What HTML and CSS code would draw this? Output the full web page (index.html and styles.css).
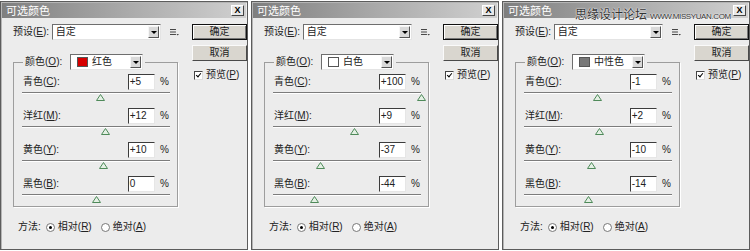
FILE: index.html
```html
<!DOCTYPE html>
<html lang="zh-CN">
<head>
  <meta charset="UTF-8">
  <title>可选颜色</title>
  <link rel="stylesheet" href="styles.css">
</head>
<body>
  <div class="dialogs">

    <!-- 红色 -->
    <div class="dialog">
      <div class="titlebar"><span>可选颜色</span><span class="close">X</span></div>
      <div class="content">
        <div class="left">
          <div class="preset">
            <label>预设(<u>E</u>):</label>
            <div class="select wide"><span>自定</span><i class="arrow"></i></div>
            <svg class="menu-icon" width="9" height="8" viewBox="0 0 9 8"><path d="M0 1.5h6M0 4h6M0 6.5h6" stroke="#444" stroke-width="1"/><path d="M6.5 6h2.5l-1.25 1.5z" fill="#444"/></svg>
          </div>
          <fieldset class="group">
            <legend>
              <label>颜色(<u>O</u>):</label>
              <div class="select color"><b class="swatch red"></b><span>红色</span><i class="arrow"></i></div>
            </legend>
            <div class="row">
              <div class="field"><label>青色(<u>C</u>):</label><span class="input">+5</span><span class="pct">%</span></div>
              <div class="slider"><svg class="thumb" style="left: 52.5%" width="9" height="7" viewBox="0 0 9 7"><path d="M4.5 0.5L8.5 6.5H0.5Z" fill="#e4f0e4" stroke="#4f8a5a"/></svg></div>
            </div>
            <div class="row">
              <div class="field"><label>洋红(<u>M</u>):</label><span class="input">+12</span><span class="pct">%</span></div>
              <div class="slider"><svg class="thumb" style="left: 56%" width="9" height="7" viewBox="0 0 9 7"><path d="M4.5 0.5L8.5 6.5H0.5Z" fill="#e4f0e4" stroke="#4f8a5a"/></svg></div>
            </div>
            <div class="row">
              <div class="field"><label>黄色(<u>Y</u>):</label><span class="input">+10</span><span class="pct">%</span></div>
              <div class="slider"><svg class="thumb" style="left: 55%" width="9" height="7" viewBox="0 0 9 7"><path d="M4.5 0.5L8.5 6.5H0.5Z" fill="#e4f0e4" stroke="#4f8a5a"/></svg></div>
            </div>
            <div class="row">
              <div class="field"><label>黑色(<u>B</u>):</label><span class="input">0</span><span class="pct">%</span></div>
              <div class="slider"><svg class="thumb" style="left: 50%" width="9" height="7" viewBox="0 0 9 7"><path d="M4.5 0.5L8.5 6.5H0.5Z" fill="#e4f0e4" stroke="#4f8a5a"/></svg></div>
            </div>
          </fieldset>
          <div class="method">
            <span>方法:</span>
            <span class="radio on"></span><span>相对(<u>R</u>)</span>
            <span class="radio"></span><span>绝对(<u>A</u>)</span>
          </div>
        </div>
        <div class="right">
          <button class="btn default">确定</button>
          <button class="btn">取消</button>
          <div class="check"><span class="box"></span><span>预览(<u>P</u>)</span></div>
        </div>
      </div>
    </div>

    <!-- 白色 -->
    <div class="dialog">
      <div class="titlebar"><span>可选颜色</span><span class="close">X</span></div>
      <div class="content">
        <div class="left">
          <div class="preset">
            <label>预设(<u>E</u>):</label>
            <div class="select wide"><span>自定</span><i class="arrow"></i></div>
            <svg class="menu-icon" width="9" height="8" viewBox="0 0 9 8"><path d="M0 1.5h6M0 4h6M0 6.5h6" stroke="#444" stroke-width="1"/><path d="M6.5 6h2.5l-1.25 1.5z" fill="#444"/></svg>
          </div>
          <fieldset class="group">
            <legend>
              <label>颜色(<u>O</u>):</label>
              <div class="select color"><b class="swatch white"></b><span>白色</span><i class="arrow"></i></div>
            </legend>
            <div class="row">
              <div class="field"><label>青色(<u>C</u>):</label><span class="input">+100</span><span class="pct">%</span></div>
              <div class="slider"><svg class="thumb" style="left: 100%" width="9" height="7" viewBox="0 0 9 7"><path d="M4.5 0.5L8.5 6.5H0.5Z" fill="#e4f0e4" stroke="#4f8a5a"/></svg></div>
            </div>
            <div class="row">
              <div class="field"><label>洋红(<u>M</u>):</label><span class="input">+9</span><span class="pct">%</span></div>
              <div class="slider"><svg class="thumb" style="left: 54.5%" width="9" height="7" viewBox="0 0 9 7"><path d="M4.5 0.5L8.5 6.5H0.5Z" fill="#e4f0e4" stroke="#4f8a5a"/></svg></div>
            </div>
            <div class="row">
              <div class="field"><label>黄色(<u>Y</u>):</label><span class="input">-37</span><span class="pct">%</span></div>
              <div class="slider"><svg class="thumb" style="left: 31.5%" width="9" height="7" viewBox="0 0 9 7"><path d="M4.5 0.5L8.5 6.5H0.5Z" fill="#e4f0e4" stroke="#4f8a5a"/></svg></div>
            </div>
            <div class="row">
              <div class="field"><label>黑色(<u>B</u>):</label><span class="input">-44</span><span class="pct">%</span></div>
              <div class="slider"><svg class="thumb" style="left: 28%" width="9" height="7" viewBox="0 0 9 7"><path d="M4.5 0.5L8.5 6.5H0.5Z" fill="#e4f0e4" stroke="#4f8a5a"/></svg></div>
            </div>
          </fieldset>
          <div class="method">
            <span>方法:</span>
            <span class="radio on"></span><span>相对(<u>R</u>)</span>
            <span class="radio"></span><span>绝对(<u>A</u>)</span>
          </div>
        </div>
        <div class="right">
          <button class="btn default">确定</button>
          <button class="btn">取消</button>
          <div class="check"><span class="box"></span><span>预览(<u>P</u>)</span></div>
        </div>
      </div>
    </div>

    <!-- 中性色 -->
    <div class="dialog">
      <div class="titlebar"><span>可选颜色</span><span class="close">X</span></div>
      <div class="watermark"><span class="wm-cn">思缘设计论坛</span><span class="wm-en">WWW.MISSYUAN.COM</span></div>
      <div class="content">
        <div class="left">
          <div class="preset">
            <label>预设(<u>E</u>):</label>
            <div class="select wide"><span>自定</span><i class="arrow"></i></div>
            <svg class="menu-icon" width="9" height="8" viewBox="0 0 9 8"><path d="M0 1.5h6M0 4h6M0 6.5h6" stroke="#444" stroke-width="1"/><path d="M6.5 6h2.5l-1.25 1.5z" fill="#444"/></svg>
          </div>
          <fieldset class="group">
            <legend>
              <label>颜色(<u>O</u>):</label>
              <div class="select color"><b class="swatch gray"></b><span>中性色</span><i class="arrow"></i></div>
            </legend>
            <div class="row">
              <div class="field"><label>青色(<u>C</u>):</label><span class="input">-1</span><span class="pct">%</span></div>
              <div class="slider"><svg class="thumb" style="left: 49.5%" width="9" height="7" viewBox="0 0 9 7"><path d="M4.5 0.5L8.5 6.5H0.5Z" fill="#e4f0e4" stroke="#4f8a5a"/></svg></div>
            </div>
            <div class="row">
              <div class="field"><label>洋红(<u>M</u>):</label><span class="input">+2</span><span class="pct">%</span></div>
              <div class="slider"><svg class="thumb" style="left: 51%" width="9" height="7" viewBox="0 0 9 7"><path d="M4.5 0.5L8.5 6.5H0.5Z" fill="#e4f0e4" stroke="#4f8a5a"/></svg></div>
            </div>
            <div class="row">
              <div class="field"><label>黄色(<u>Y</u>):</label><span class="input">-10</span><span class="pct">%</span></div>
              <div class="slider"><svg class="thumb" style="left: 45%" width="9" height="7" viewBox="0 0 9 7"><path d="M4.5 0.5L8.5 6.5H0.5Z" fill="#e4f0e4" stroke="#4f8a5a"/></svg></div>
            </div>
            <div class="row">
              <div class="field"><label>黑色(<u>B</u>):</label><span class="input">-14</span><span class="pct">%</span></div>
              <div class="slider"><svg class="thumb" style="left: 43%" width="9" height="7" viewBox="0 0 9 7"><path d="M4.5 0.5L8.5 6.5H0.5Z" fill="#e4f0e4" stroke="#4f8a5a"/></svg></div>
            </div>
          </fieldset>
          <div class="method">
            <span>方法:</span>
            <span class="radio on"></span><span>相对(<u>R</u>)</span>
            <span class="radio"></span><span>绝对(<u>A</u>)</span>
          </div>
        </div>
        <div class="right">
          <button class="btn default">确定</button>
          <button class="btn">取消</button>
          <div class="check"><span class="box"></span><span>预览(<u>P</u>)</span></div>
        </div>
      </div>
    </div>

  </div>
</body>
</html>
```

FILE: styles.css
```css
body {
  margin: 0;
  background: #fff;
  font-family: "Liberation Sans", "Noto Sans CJK SC", sans-serif;
  font-size: 10px;
  line-height: 16px;
  color: #222;
}

.dialogs {
  display: flex;
  gap: 3px;
  padding-top: 1px;
}

.dialog {
  position: relative;
  flex: none;
  width: 248px;
  height: 249px;
  box-sizing: border-box;
  border: 1px solid #5c5c5c;
  box-shadow: inset 1px 1px 0 #b5b5b5;
  background: #ececec;
}

.titlebar {
  height: 15px;
  margin: 1px 1px 0 1px;
  padding: 0 2px 0 4px;
  display: flex;
  align-items: center;
  justify-content: space-between;
  background: linear-gradient(to right, #7f7f7f, #a9a9a9 50%, #d0d0d0);
  color: #fff;
  font-size: 11px;
}

.close {
  width: 13px;
  height: 11px;
  box-sizing: border-box;
  display: flex;
  align-items: center;
  justify-content: center;
  background: #e8e8e8;
  border: 1px solid;
  border-color: #fff #444 #444 #fff;
  color: #000;
  font-weight: bold;
  font-size: 9px;
  line-height: 1;
}

.watermark {
  position: absolute;
  left: 72px;
  top: 7px;
  display: flex;
  align-items: baseline;
  gap: 3px;
  color: #333;
  line-height: 13px;
  text-shadow: 0 0 2px #fff, 0 0 1px #fff;
}

.wm-cn {
  font-size: 12px;
}

.wm-en {
  font-size: 8px;
  letter-spacing: -0.4px;
}

.content {
  display: flex;
  padding: 6px 0 0 12px;
}

.left {
  width: 166px;
}

.preset {
  display: flex;
  align-items: center;
  height: 16px;
}

.preset label {
  width: 39px;
}

.menu-icon {
  margin-left: 9px;
}

.select {
  height: 16px;
  box-sizing: border-box;
  display: flex;
  align-items: center;
  padding-left: 3px;
  background: #fff;
  border: 1px solid;
  border-color: #6e6e6e #e4e4e4 #e4e4e4 #6e6e6e;
}

.select.wide {
  width: 110px;
}

.select.color {
  width: 73px;
}

.arrow {
  position: relative;
  margin-left: auto;
  margin-right: 1px;
  width: 11px;
  height: 12px;
  box-sizing: border-box;
  background: #d9d9d9;
  border: 1px solid;
  border-color: #f6f6f6 #555 #555 #f6f6f6;
}

.arrow::after {
  content: "";
  position: absolute;
  left: 2px;
  top: 4px;
  border-left: 3px solid transparent;
  border-right: 3px solid transparent;
  border-top: 3px solid #000;
}

.swatch {
  width: 11px;
  height: 10px;
  margin: 0 4px 0 3px;
  box-sizing: border-box;
  border: 1px solid #555;
}

.swatch.red { background: #d60000; }
.swatch.white { background: #fff; }
.swatch.gray { background: #777; }

.group {
  width: 165px;
  box-sizing: border-box;
  min-width: 0;
  margin: 14px 0 0 0;
  padding: 0 8px 0 9px;
  border: 1px solid #9d9d9d;
  box-shadow: 1px 1px 0 #fff;
}

.group legend {
  display: flex;
  align-items: center;
  padding: 0 2px;
}

.group legend label {
  width: 45px;
}

.row:first-of-type {
  margin-top: 4px;
}

.field {
  display: flex;
  align-items: center;
  height: 16px;
}

.field label {
  width: 107px;
}

.input {
  width: 28px;
  height: 16px;
  box-sizing: border-box;
  padding-left: 1px;
  background: #fff;
  border: 1px solid;
  border-color: #3c3c3c #e6e6e6 #e6e6e6 #3c3c3c;
  line-height: 14px;
}

.pct {
  margin-left: 5px;
}

.slider {
  position: relative;
  width: 148px;
  height: 18px;
  margin-left: -1px;
}

.row:last-child .slider {
  height: 14px;
}

.slider::before {
  content: "";
  position: absolute;
  left: 0;
  right: 0;
  top: 2px;
  border-top: 1px solid #7c7c7c;
  border-bottom: 1px solid #fff;
}

.thumb {
  position: absolute;
  top: 4px;
  margin-left: -4px;
}

.method {
  display: flex;
  align-items: center;
  height: 14px;
  margin: 13px 0 0 5px;
}

.radio {
  position: relative;
  width: 9px;
  height: 9px;
  box-sizing: border-box;
  margin: 0 3px 0 5px;
  border-radius: 50%;
  background: #fff;
  border: 1px solid #777;
}

.radio + span + .radio {
  margin-left: 9px;
}

.radio.on::after {
  content: "";
  position: absolute;
  left: 2px;
  top: 2px;
  width: 3px;
  height: 3px;
  border-radius: 50%;
  background: #000;
}

.right {
  width: 55px;
  margin-left: 13px;
  display: flex;
  flex-direction: column;
}

.btn {
  height: 16px;
  width: 55px;
  padding: 0;
  font: inherit;
  line-height: 14px;
  color: #222;
  background: #d9d6cf;
  border: 1px solid;
  border-color: #fafafa #4a4a4a #4a4a4a #fafafa;
}

.btn.default {
  border-color: #111;
  box-shadow: inset 1px 1px 0 #fff, inset -1px -1px 0 #777;
}

.btn + .btn {
  margin-top: 5px;
}

.check {
  display: flex;
  align-items: center;
  gap: 3px;
  margin: 6px 0 0 2px;
  white-space: nowrap;
}

.box {
  position: relative;
  width: 9px;
  height: 9px;
  box-sizing: border-box;
  background: #fff;
  border: 1px solid;
  border-color: #444 #ddd #ddd #444;
}

.box::after {
  content: "";
  position: absolute;
  left: 2px;
  top: 0;
  width: 2px;
  height: 4px;
  border-right: 1.5px solid #000;
  border-bottom: 1.5px solid #000;
  transform: rotate(40deg);
}
```
